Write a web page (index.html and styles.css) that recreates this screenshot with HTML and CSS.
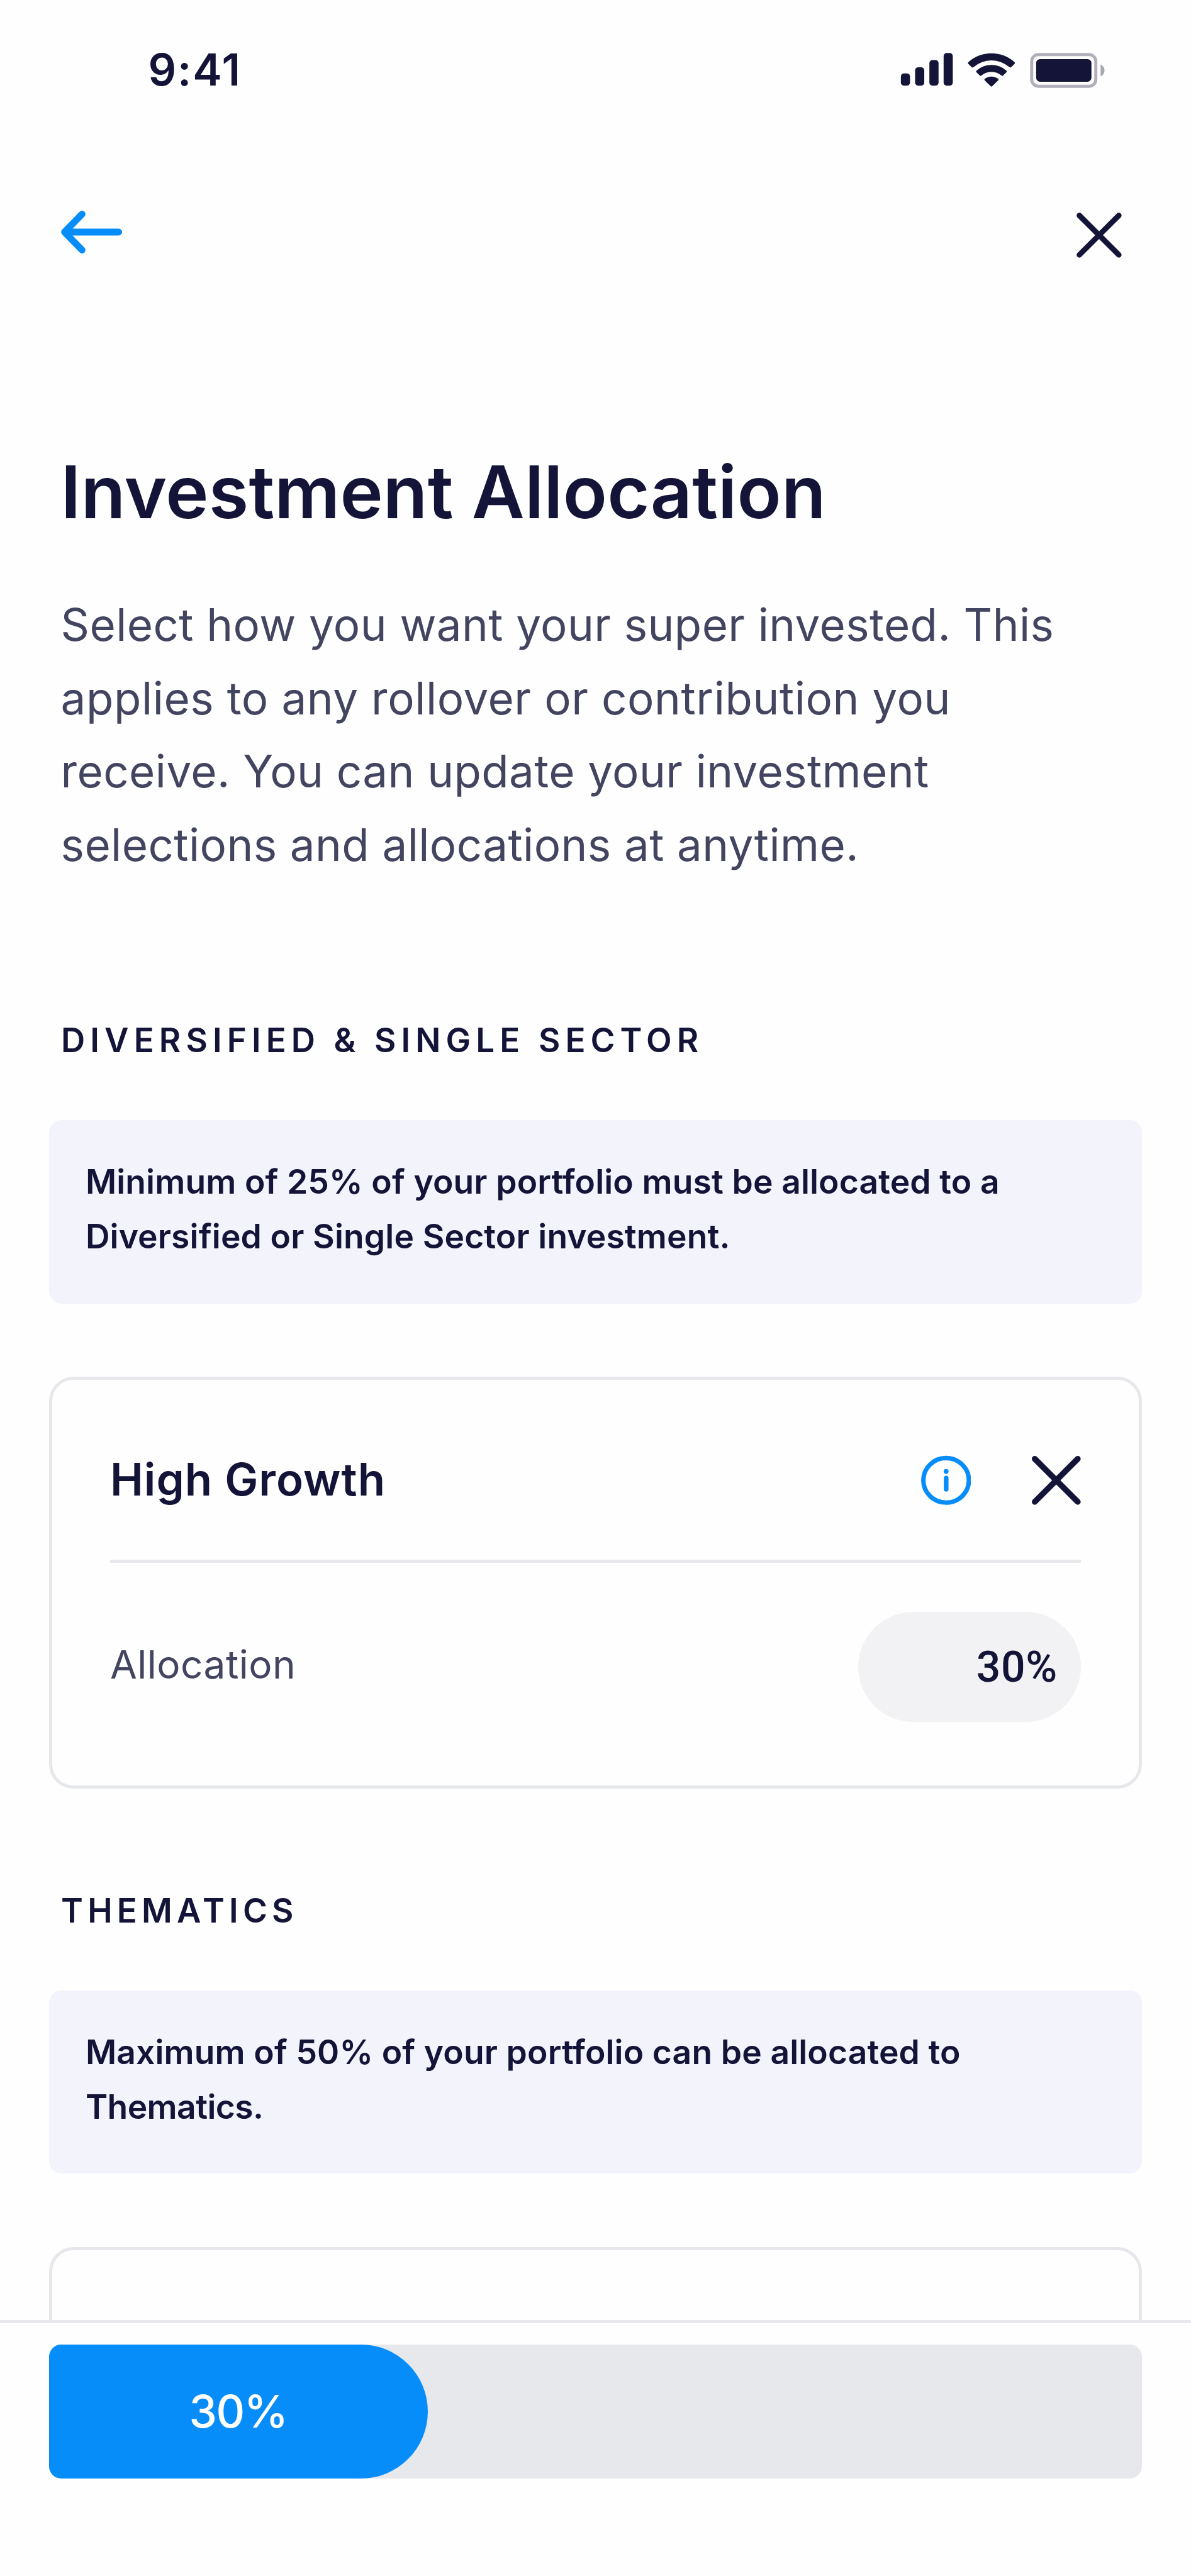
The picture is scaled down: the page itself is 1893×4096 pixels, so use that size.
FILE: index.html
```html
<!DOCTYPE html>
<html lang="en">
<head>
<meta charset="utf-8">
<title>Investment Allocation</title>
<link rel="stylesheet" href="styles.css">
</head>
<body>
<div class="screen">
  <main class="content">
    <div class="status-bar">
      <span class="clock">9:41</span>
      <svg class="status-icons" viewBox="1470 80 345 70" aria-hidden="true">
        <g fill="#141438">
          <rect x="1475" y="120" width="15" height="20" rx="5"/>
          <rect x="1498.3" y="110" width="15" height="30" rx="5"/>
          <rect x="1521.7" y="98" width="15" height="42" rx="5"/>
          <rect x="1545" y="86.5" width="15" height="53.5" rx="5"/>
          <path d="M1585.6 101.5 A56 56 0 0 1 1661 101.5 Q1662.4 103 1661 104.4 L1655.4 110 Q1654.4 111 1653.2 110 A45 45 0 0 0 1593.4 110 Q1592.2 111 1591.2 110 L1585.6 104.4 Q1584.2 103 1585.6 101.5Z"/>
          <path d="M1598.8 115.4 A36.5 36.5 0 0 1 1647.8 115.4 Q1649.2 116.8 1647.8 118.2 L1642.2 123.6 Q1641.2 124.6 1640 123.6 A25.5 25.5 0 0 0 1606.6 123.6 Q1605.4 124.6 1604.4 123.6 L1598.8 118.2 Q1597.4 116.8 1598.8 115.4Z"/>
          <path d="M1612.4 128.8 A17.5 17.5 0 0 1 1634.2 128.8 Q1635.6 130 1634.2 131.4 L1624.4 141 Q1623.3 142 1622.2 141 L1612.4 131.4 Q1611 130 1612.4 128.8Z"/>
          <rect x="1696.5" y="96.5" width="90.5" height="37" rx="6.5"/>
        </g>
        <rect x="1689.2" y="89" width="105" height="52" rx="11" fill="none" stroke="#b0afba" stroke-width="5"/>
        <path d="M1802 105 Q1808.5 108.5 1808.5 115 T1802 125Z" fill="#a8a8b4"/>
      </svg>
    </div>
    <nav class="nav">
      <svg class="back" viewBox="100 345 100 70" role="img" aria-label="Back">
        <path d="M134.4 350.6 L105.7 380 L134.4 409.4 M105.7 380 H194.4" fill="none" stroke="#068dfa" stroke-width="11.2" stroke-linecap="round" stroke-linejoin="round"/>
      </svg>
      <svg class="close" viewBox="1763 348 74 74" role="img" aria-label="Close">
        <path d="M1767.7 352.7 L1832.3 417.3 M1832.3 352.7 L1767.7 417.3" stroke="#141438" stroke-width="9" stroke-linecap="round"/>
      </svg>
    </nav>
    <h1 class="title">Investment Allocation</h1>
    <p class="intro">
      <span class="line">Select how you want your super invested. This</span>
      <span class="line line-wide">applies to any rollover or contribution you</span>
      <span class="line">receive. You can update your investment</span>
      <span class="line">selections and allocations at anytime.</span>
    </p>

    <h2 class="section-title">DIVERSIFIED &amp; SINGLE SECTOR</h2>
    <p class="notice">
      <span class="line">Minimum of 25% of your portfolio must be allocated to a</span>
      <span class="line">Diversified or Single Sector investment.</span>
    </p>
    <section class="card">
      <div class="card-head">
        <h3 class="fund">High Growth</h3>
        <svg class="info" viewBox="1508 2384 82 82" role="img" aria-label="Info">
          <ellipse cx="1549" cy="2425" rx="37.3" ry="36.5" fill="none" stroke="#068dfa" stroke-width="7.3"/>
          <circle cx="1549" cy="2410.3" r="4" fill="#068dfa"/>
          <rect x="1545.2" y="2417.5" width="7.7" height="26" rx="3.8" fill="#068dfa"/>
        </svg>
        <svg class="remove" viewBox="1690 2385 80 80" role="img" aria-label="Remove">
          <path d="M1694.8 2389.8 L1765.2 2460.2 M1765.2 2389.8 L1694.8 2460.2" stroke="#141438" stroke-width="9.6" stroke-linecap="round"/>
        </svg>
      </div>
      <div class="card-row">
        <span class="label">Allocation</span>
        <span class="amount">30%</span>
      </div>
    </section>

    <h2 class="section-title">THEMATICS</h2>
    <p class="notice">
      <span class="line">Maximum of 50% of your portfolio can be allocated to</span>
      <span class="line line-tight">Thematics.</span>
    </p>
    <section class="card"></section>
  </main>
  <footer class="footer">
    <div class="progress">
      <div class="progress-fill"><span class="progress-text">30%</span></div>
    </div>
  </footer>
</div>
</body>
</html>
```
FILE: styles.css
```css
/* 1rem is one point of a 390pt wide screen */
html { font-size: calc(100vw / 390); }

* { box-sizing: border-box; margin: 0; padding: 0; }

body {
  height: 100vh;
  overflow: hidden;
  background: #fefefe;
  color: #141438;
  font-family: Inter, "Liberation Sans", sans-serif;
}

svg { display: block; flex: none; }

.screen { display: flex; flex-direction: column; height: 100vh; }

.content {
  flex: none;
  height: 760rem;
  padding: 0 16rem;
  overflow: hidden;
}

.line { display: block; white-space: nowrap; }

.status-bar {
  display: flex;
  justify-content: space-between;
  height: 69rem;
  padding: 12.7rem 11rem 0 32.5rem;
}
.clock {
  font-size: 14.4rem;
  line-height: 20rem;
  font-weight: 600;
  letter-spacing: .4rem;
}
.status-icons { width: 69rem; height: 14rem; margin-top: 3.3rem; }

.nav {
  display: flex;
  justify-content: space-between;
  align-items: flex-start;
  height: 76.3rem;
  padding: 0 6.6rem 0 4rem;
}
.back { width: 20rem; height: 14rem; }
.close { width: 14.8rem; height: 14.8rem; margin-top: .6rem; }

.title {
  padding-left: 3.9rem;
  font-size: 23.8rem;
  line-height: 32rem;
  font-weight: 600;
  letter-spacing: .027rem;
}

.intro {
  margin-top: 15.4rem;
  padding-left: 3.9rem;
  color: #434460;
  font-size: 14.6rem;
  line-height: 24rem;
  letter-spacing: .085rem;
}
.intro .line-wide { letter-spacing: .12rem; }

.section-title {
  margin-top: 42.2rem;
  padding-left: 4rem;
  font-size: 10.9rem;
  line-height: 20rem;
  font-weight: 600;
  letter-spacing: 1.67rem;
}
.card + .section-title { margin-top: 30rem; letter-spacing: 1.48rem; }

.notice {
  height: 60rem;
  margin-top: 16.1rem;
  padding: 11rem 12rem;
  border-radius: 4rem;
  background: #f2f3fb;
  font-size: 11rem;
  line-height: 18rem;
  font-weight: 600;
  letter-spacing: .025rem;
}
.notice .line-tight { letter-spacing: -.12rem; }

.card {
  height: 135rem;
  margin-top: 24rem;
  padding: 0 19rem;
  border: 5px solid #e7e8eb;
  border-radius: 8rem;
}
.card-head {
  display: flex;
  align-items: flex-start;
  height: 60rem;
  padding-top: 22.7rem;
  border-bottom: 5px solid #e7e8eb;
}
.fund {
  flex: 1;
  font-size: 14.6rem;
  line-height: 20rem;
  font-weight: 600;
  letter-spacing: .22rem;
}
.info { width: 16.4rem; height: 16.4rem; margin-top: 2.1rem; }
.remove { width: 16rem; height: 16rem; margin: 2.3rem 0 0 20rem; }

.card-row {
  display: flex;
  justify-content: space-between;
  align-items: center;
  margin-top: 16rem;
}
.label {
  padding-bottom: 1.4rem;
  color: #434460;
  font-size: 12.8rem;
  line-height: 20rem;
  letter-spacing: .1rem;
}
.amount {
  width: 73rem;
  height: 36rem;
  padding: 8.2rem 7.7rem 0 0;
  border-radius: 18rem;
  background: #f2f2f4;
  font-family: Roboto, sans-serif;
  font-size: 14rem;
  line-height: 20rem;
  font-weight: 500;
  letter-spacing: .12rem;
  text-align: right;
}

.footer {
  flex: 1;
  padding: 7rem 16rem 0;
  border-top: 5px solid #e7e8eb;
}
.progress {
  height: 44rem;
  border-radius: 4rem;
  background: #e7e8eb;
}
.progress-fill {
  display: flex;
  align-items: center;
  justify-content: center;
  width: 124rem;
  height: 44rem;
  border-radius: 4rem 22rem 22rem 4rem;
  background: #068dfa;
}
.progress-text {
  color: #fff;
  font-size: 14.6rem;
  line-height: 20rem;
  font-weight: 500;
  letter-spacing: -.3rem;
}
```
